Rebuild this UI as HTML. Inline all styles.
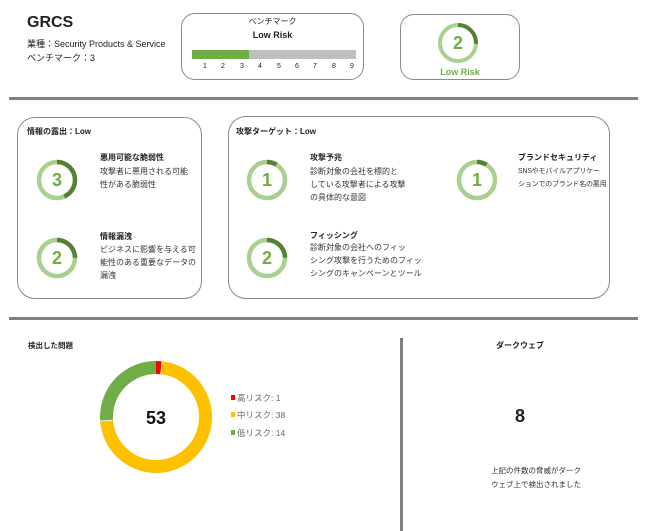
<!DOCTYPE html>
<html><head><meta charset="utf-8"><style>
*{margin:0;padding:0;box-sizing:border-box}
body{width:648px;height:531px;background:#fff;position:relative;overflow:hidden;font-family:"Liberation Sans","Noto Sans CJK JP",sans-serif;color:#222}
.a{position:absolute;white-space:nowrap}
.box{position:absolute;border:1px solid #8a8a8a;border-radius:18px}
.b{font-weight:bold}
.t8{font-size:8px;line-height:13px}
.d{font-size:8px;line-height:13px;color:#333}
.hr{position:absolute;background:#808080}
svg{position:absolute}
.num{font-weight:bold;fill:#70ad47;font-family:"Liberation Sans",sans-serif}
</style></head><body>
<div class="a b" style="left:27px;top:14px;font-size:16px">GRCS</div>
<div class="a" style="left:27px;top:37px;font-size:9px">業種：Security Products &amp; Service</div>
<div class="a" style="left:27px;top:51px;font-size:9px">ベンチマーク：3</div>

<div class="box" style="left:181px;top:13px;width:183px;height:67px;border-radius:14px"></div>
<div class="a" style="left:181px;width:183px;text-align:center;top:16px;font-size:8px">ベンチマーク</div>
<div class="a b" style="left:181px;width:183px;text-align:center;top:30px;font-size:9px">Low Risk</div>
<div class="a" style="left:192px;top:50px;width:164px;height:9px;background:#bfbfbf"></div>
<div class="a" style="left:192px;top:50px;width:57px;height:9px;background:#70ad47"></div>
<div class="a" style="left:203px;top:63px;font-size:7px">1</div>
<div class="a" style="left:221px;top:63px;font-size:7px">2</div>
<div class="a" style="left:240px;top:63px;font-size:7px">3</div>
<div class="a" style="left:258px;top:63px;font-size:7px">4</div>
<div class="a" style="left:277px;top:63px;font-size:7px">5</div>
<div class="a" style="left:295px;top:63px;font-size:7px">6</div>
<div class="a" style="left:313px;top:63px;font-size:7px">7</div>
<div class="a" style="left:332px;top:63px;font-size:7px">8</div>
<div class="a" style="left:350px;top:63px;font-size:7px">9</div>

<div class="box" style="left:400px;top:14px;width:120px;height:66px;border-radius:14px"></div>
<svg style="left:436px;top:21px" width="44" height="44"><circle cx="22" cy="22" r="18" fill="none" stroke="#a9d08e" stroke-width="4"/><circle cx="22" cy="22" r="18" fill="none" stroke="#548235" stroke-width="4" stroke-dasharray="29 200" transform="rotate(-90 22 22)"/><text x="22" y="28" text-anchor="middle" font-size="18" class="num">2</text></svg>
<div class="a b" style="left:400px;width:120px;text-align:center;top:67px;font-size:9px;color:#70ad47">Low Risk</div>

<div class="hr" style="left:9px;top:97px;width:629px;height:3px"></div>

<div class="box" style="left:17px;top:117px;width:185px;height:182px"></div>
<div class="a b t8" style="left:27px;top:125px">情報の露出：Low</div>
<svg style="left:35px;top:158px" width="44" height="44"><circle cx="22" cy="22" r="18" fill="none" stroke="#a9d08e" stroke-width="4.5"/><circle cx="22" cy="22" r="18" fill="none" stroke="#548235" stroke-width="4.5" stroke-dasharray="49 200" transform="rotate(-90 22 22)"/><text x="22" y="28" text-anchor="middle" font-size="18" class="num">3</text></svg>
<div class="a b t8" style="left:100px;top:151px">悪用可能な脆弱性</div>
<div class="a d" style="left:100px;top:165px">攻撃者に悪用される可能<br>性がある脆弱性</div>
<svg style="left:35px;top:236px" width="44" height="44"><circle cx="22" cy="22" r="18" fill="none" stroke="#a9d08e" stroke-width="4.5"/><circle cx="22" cy="22" r="18" fill="none" stroke="#548235" stroke-width="4.5" stroke-dasharray="28 200" transform="rotate(-90 22 22)"/><text x="22" y="28" text-anchor="middle" font-size="18" class="num">2</text></svg>
<div class="a b t8" style="left:100px;top:230px">情報漏洩</div>
<div class="a d" style="left:100px;top:243px">ビジネスに影響を与える可<br>能性のある重要なデータの<br>漏洩</div>

<div class="box" style="left:228px;top:116px;width:382px;height:183px"></div>
<div class="a b t8" style="left:236px;top:125px">攻撃ターゲット：Low</div>
<svg style="left:245px;top:158px" width="44" height="44"><circle cx="22" cy="22" r="18" fill="none" stroke="#a9d08e" stroke-width="4.5"/><circle cx="22" cy="22" r="18" fill="none" stroke="#548235" stroke-width="4.5" stroke-dasharray="10 200" transform="rotate(-90 22 22)"/><text x="22" y="28" text-anchor="middle" font-size="18" class="num">1</text></svg>
<div class="a b t8" style="left:310px;top:151px">攻撃予兆</div>
<div class="a d" style="left:310px;top:165px">診断対象の会社を標的と<br>している攻撃者による攻撃<br>の具体的な意図</div>
<svg style="left:455px;top:158px" width="44" height="44"><circle cx="22" cy="22" r="18" fill="none" stroke="#a9d08e" stroke-width="4.5"/><circle cx="22" cy="22" r="18" fill="none" stroke="#548235" stroke-width="4.5" stroke-dasharray="10 200" transform="rotate(-90 22 22)"/><text x="22" y="28" text-anchor="middle" font-size="18" class="num">1</text></svg>
<div class="a b t8" style="left:518px;top:151px">ブランドセキュリティ</div>
<div class="a d" style="left:518px;top:165px;font-size:7px;letter-spacing:-0.2px">SNSやモバイルアプリケー<br>ションでのブランド名の悪用</div>
<svg style="left:245px;top:236px" width="44" height="44"><circle cx="22" cy="22" r="18" fill="none" stroke="#a9d08e" stroke-width="4.5"/><circle cx="22" cy="22" r="18" fill="none" stroke="#548235" stroke-width="4.5" stroke-dasharray="28 200" transform="rotate(-90 22 22)"/><text x="22" y="28" text-anchor="middle" font-size="18" class="num">2</text></svg>
<div class="a b t8" style="left:310px;top:229px">フィッシング</div>
<div class="a d" style="left:310px;top:241px">診断対象の会社へのフィッ<br>シング攻撃を行うためのフィッ<br>シングのキャンペーンとツール</div>

<div class="hr" style="left:9px;top:317px;width:629px;height:3px"></div>
<div class="hr" style="left:400px;top:338px;width:3px;height:193px"></div>

<div class="a b" style="left:28px;top:340px;font-size:7.5px">検出した問題</div>
<svg style="left:96px;top:357px" width="120" height="120">
<g transform="rotate(-90 60 60)" fill="none" stroke-width="13">
<circle cx="60" cy="60" r="49.5" stroke="#ff0000" stroke-dasharray="5.1 400"/>
<circle cx="60" cy="60" r="49.5" stroke="#ffc000" stroke-dasharray="0 5.9 222.9 400"/>
<circle cx="60" cy="60" r="49.5" stroke="#70ad47" stroke-dasharray="0 229.6 81.2 400"/>
</g>
<text x="60" y="67" text-anchor="middle" font-size="18" font-weight="bold" fill="#111">53</text></svg>
<div class="a" style="left:231px;top:395px;width:4px;height:5px;background:#ff0000"></div>
<div class="a" style="left:237px;top:392px;font-size:8.5px;color:#666">高リスク: 1</div>
<div class="a" style="left:231px;top:412px;width:4px;height:5px;background:#ffc000"></div>
<div class="a" style="left:237px;top:409px;font-size:8.5px;color:#666">中リスク: 38</div>
<div class="a" style="left:231px;top:430px;width:4px;height:5px;background:#70ad47"></div>
<div class="a" style="left:237px;top:427px;font-size:8.5px;color:#666">低リスク: 14</div>

<div class="a b" style="left:470px;width:100px;text-align:center;top:340px;font-size:8px">ダークウェブ</div>
<div class="a b" style="left:470px;width:100px;text-align:center;top:406px;font-size:18px">8</div>
<div class="a d" style="left:491px;top:464px;font-size:7.5px;line-height:14px">上記の件数の脅威がダーク<br>ウェブ上で検出されました</div>
</body></html>
